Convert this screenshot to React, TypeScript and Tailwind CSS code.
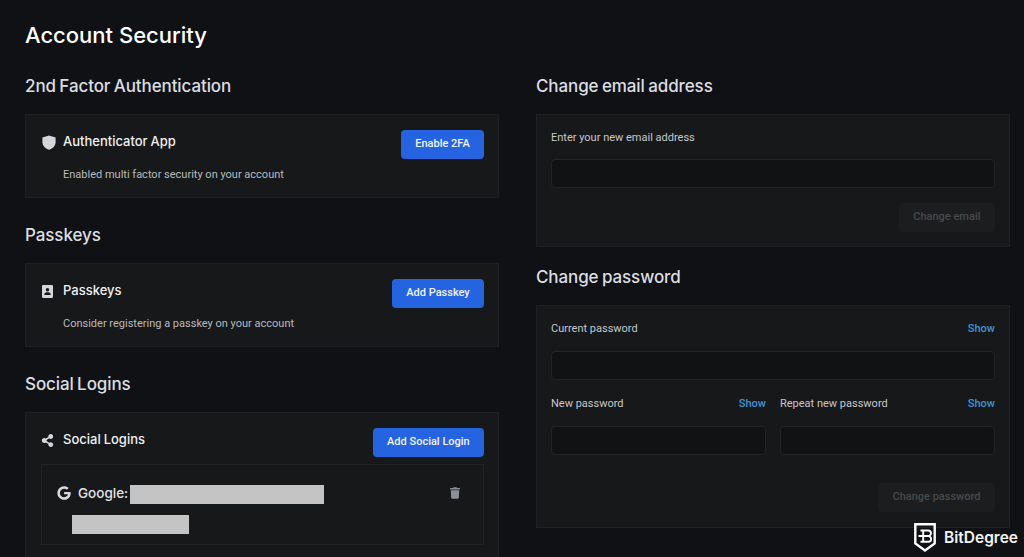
import React from "react";
import { FaGoogle, FaShareAlt, FaTrash } from "react-icons/fa";

const heading = "font-['Inter',sans-serif] text-[17px] leading-[24px] font-medium tracking-[-0.1px] [word-spacing:-1px] text-[#dcdee2]";
const cardBox = "border border-[#1e2023] bg-[#17181a]";
const blueBtn = "flex h-[29px] items-center rounded-[4px] bg-[#2563e0] px-[14.25px] text-[11px] font-medium text-[#f1f4fa]";
const label = "text-[11px] leading-[16px] text-[#c6c8cb]";
const show = "text-[11px] leading-[16px] font-medium text-[#3f94d6]";
const input = "h-[29px] w-full rounded-[4px] border border-[#222428] bg-[#111214]";
const grayBtn = "flex h-[29px] items-center rounded-[4px] bg-[#1c1d1f] px-[14.5px] text-[11px] font-medium text-[#48494c]";
const rowTitle = "font-['Inter',sans-serif] text-[13px] font-medium [word-spacing:-0.5px] text-[#eef0f2]";

function Shield() {
  return (
    <svg viewBox="0 0 14 15" className="h-[15px] w-[14px]">
      <path d="M7 .4 13.6 2.4V7C13.6 10.8 11 13.4 7 14.8 3 13.4.4 10.8.4 7V2.4Z" fill="#d4d6dc" />
    </svg>
  );
}

function Contact() {
  return (
    <svg viewBox="0 0 12 14" className="h-[13px] w-[11px]">
      <path fillRule="evenodd" fill="#d4d6dc" d="M1.2 0H10.8A1.2 1.2 0 0 1 12 1.2V12.8A1.2 1.2 0 0 1 10.8 14H1.2A1.2 1.2 0 0 1 0 12.8V1.2A1.2 1.2 0 0 1 1.2 0ZM6 3.2A1.9 1.9 0 1 0 6 7 1.9 1.9 0 0 0 6 3.2ZM2.6 10.8H9.4V9.9C9.4 8.6 7.6 7.9 6 7.9S2.6 8.6 2.6 9.9Z" />
    </svg>
  );
}

function Logo() {
  return (
    <svg viewBox="0 0 22 29" className="h-[29px] w-[22px]">
      <path d="M1.3 1.3H20.7V20.5L11 27.5 1.3 20.5Z" fill="none" stroke="#fff" strokeWidth="2.4" />
      <path d="M6.5 7.5H14.2A2.6 2.6 0 0 1 14.2 13 2.8 2.8 0 0 1 14.2 18.8H6.5M9.2 7.5V18.8M4.5 13H14.2" fill="none" stroke="#fff" strokeWidth="1.9" />
    </svg>
  );
}

function FeatureCard({ icon, title, desc, action }: { icon: React.ReactNode; title: string; desc: string; action: string }) {
  return (
    <div className={`${cardBox} h-[84px] pt-[15px] pr-[14px] pl-[15px]`}>
      <div className="flex items-start justify-between">
        <div className="pt-[1px]">
          <div className="flex h-[22px] items-center">
            <span className="flex w-[22px] items-center pl-[1px]">{icon}</span>
            <span className={rowTitle}>{title}</span>
          </div>
          <p className="mt-[14px] pl-[22px] text-[11px] leading-[16px] text-[#b9bbbe]">{desc}</p>
        </div>
        <button className={blueBtn}>{action}</button>
      </div>
    </div>
  );
}

function FieldHeader({ name }: { name: string }) {
  return (
    <div className="mb-[14px] flex items-center justify-between">
      <span className={label}>{name}</span>
      <span className={show}>Show</span>
    </div>
  );
}

export default function App() {
  return (
    <div className="relative h-[557px] w-[1024px] overflow-hidden bg-[#0f1114] font-['Roboto',sans-serif]">
      <div className="px-[25px] pt-[19px]">
        <h1 className="font-['Inter',sans-serif] text-[22px] leading-[32px] font-medium text-white">Account Security</h1>
        <div className="mt-[23px] grid grid-cols-[474px_474px] gap-x-[37px]">
          <div className="flex flex-col">
            <h2 className={heading}>2nd Factor Authentication</h2>
            <div className="mt-[16px]">
              <FeatureCard icon={<Shield />} title="Authenticator App" desc="Enabled multi factor security on your account" action="Enable 2FA" />
            </div>
            <h2 className={`${heading} mt-[25px]`}>Passkeys</h2>
            <div className="mt-[16px]">
              <FeatureCard icon={<Contact />} title="Passkeys" desc="Consider registering a passkey on your account" action="Add Passkey" />
            </div>
            <h2 className={`${heading} mt-[25px]`}>Social Logins</h2>
            <div className={`${cardBox} mt-[16px] h-[200px] pt-[15px] pr-[14px] pl-[15px]`}>
              <div className="flex items-start justify-between">
                <div className="flex h-[22px] items-center pt-[2px]">
                  <span className="flex w-[22px] items-center"><FaShareAlt className="h-[13px] w-[13px] text-[#d4d6dc]" /></span>
                  <span className={rowTitle}>Social Logins</span>
                </div>
                <button className={blueBtn}>Add Social Login</button>
              </div>
              <div className="mt-[7px] flex h-[81px] justify-between border border-[#202226] pt-[18px] pr-[23px] pl-[15px]">
                <div>
                  <div className="flex items-center">
                    <FaGoogle className="relative -top-[2px] mr-[7px] h-[14px] w-[14px] text-[#d8d9dc]" />
                    <span className="pb-[3px] font-['Inter',sans-serif] text-[13.5px] font-medium text-[#e4e5e8]">Google:</span>
                    <div className="ml-[2px] h-[19px] w-[194px] bg-[#c4c4c4]" />
                  </div>
                  <div className="mt-[9px] ml-[15px] h-[19px] w-[117px] bg-[#c4c4c4]" />
                </div>
                <FaTrash className="mt-[4px] h-[12px] w-[10px] text-[#8b8f98]" />
              </div>
            </div>
          </div>

          <div className="flex flex-col">
            <h2 className={heading}>Change email address</h2>
            <div className={`${cardBox} mt-[16px] h-[133px] px-[14px] pt-[15px]`}>
              <p className={label}>Enter your new email address</p>
              <div className={`${input} mt-[13px]`} />
              <div className="mt-[15px] flex justify-end">
                <button className={grayBtn}>Change email</button>
              </div>
            </div>
            <h2 className={`${heading} mt-[18px]`}>Change password</h2>
            <div className={`${cardBox} mt-[16px] h-[223px] px-[14px] pt-[15px]`}>
              <FieldHeader name="Current password" />
              <div className={input} />
              <div className="mt-[16px] grid grid-cols-2 gap-x-[14px]">
                <div>
                  <FieldHeader name="New password" />
                  <div className={input} />
                </div>
                <div>
                  <FieldHeader name="Repeat new password" />
                  <div className={input} />
                </div>
              </div>
              <div className="mt-[28px] flex justify-end">
                <button className={grayBtn}>Change password</button>
              </div>
            </div>
          </div>
        </div>
      </div>
      <div className="absolute top-[523px] left-[914px] flex items-center gap-[8px]">
        <Logo />
        <span className="font-['Inter',sans-serif] text-[15.5px] font-semibold text-[#f4f4f4]">BitDegree</span>
      </div>
    </div>
  );
}
